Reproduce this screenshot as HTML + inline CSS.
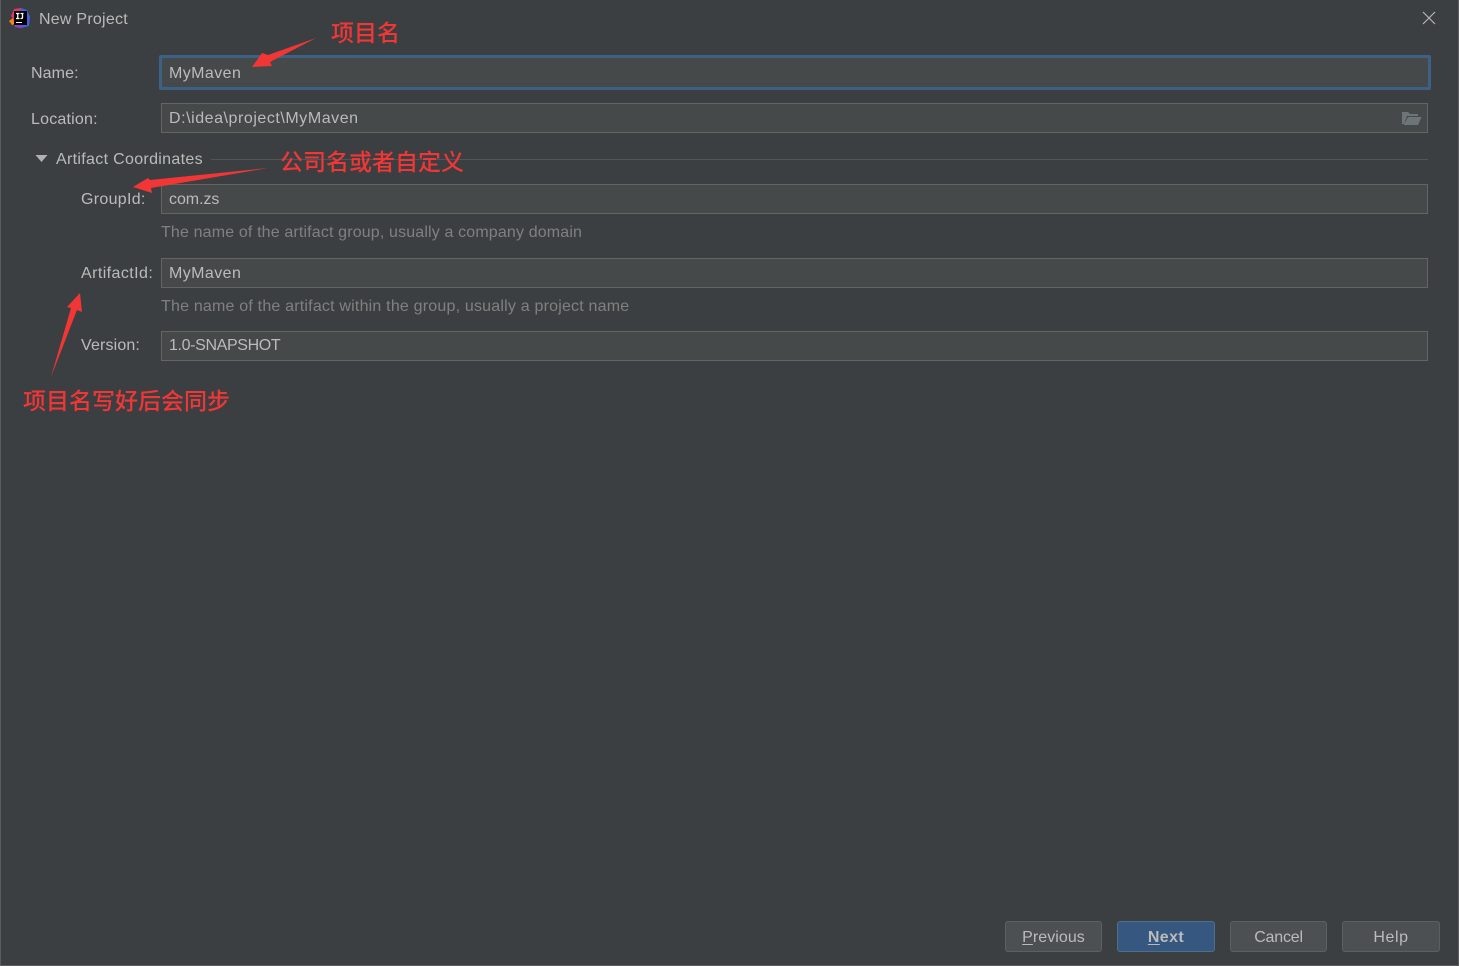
<!DOCTYPE html>
<html lang="zh">
<head>
<meta charset="utf-8">
<title>New Project</title>
<style>
html,body{margin:0;padding:0;background:#3c3f41}
#w{position:relative;width:1459px;height:966px;overflow:hidden;background:#3c3f41;font-family:"Liberation Sans","Noto Sans CJK SC",sans-serif;font-size:16px;color:#bbbbbb}
#w div{position:absolute;box-sizing:border-box;white-space:nowrap}
.t{line-height:20px;height:20px;letter-spacing:.42px}
.f{left:161px;width:1267px;height:30px;background:#45494a;border:1px solid #646464}
.h{color:#808080;letter-spacing:.17px;line-height:20px;height:20px}
.b{top:921px;width:98px;height:31px;border:1px solid #5e6060;border-radius:3px;background:#4c5052;text-align:center;line-height:31px;letter-spacing:.42px}
.r{color:#f23636;font-family:"Noto Sans CJK SC","Liberation Sans",sans-serif;font-size:23px;font-weight:500;line-height:30px;height:30px}
u{text-underline-offset:2px}
</style>
</head>
<body>
<div id="w">
<div style="left:0;top:0;width:1459px;height:966px;border:1px solid #5a5c5e;border-top:0"></div>

<svg style="position:absolute;left:9px;top:7px" width="22" height="22" viewBox="0 0 22 22">
<path d="M2 9 L5 2 L12 1 L12 8 L5 13 Z" fill="#e8306a"/>
<path d="M0 14 L4 11 L6 17 L3 18 Z" fill="#f58220"/>
<path d="M12 1 L18 3 L21 10 L20 19 L12 21 L6 20 L10 8 Z" fill="#3d63e0"/>
<path d="M5 18 L14 18 L12 21 L6 20 Z" fill="#8a3ec9"/>
<rect x="5" y="4" width="13" height="14" fill="#000"/>
<path d="M7 6.500H10.500M8.750 6.500V11.500M7 11.500H10.500M11.500 6.500H14.500M13.500 6.500V10.500Q13.500 11.500 12.300 11.500H11.500" stroke="#fff" stroke-width="1.300" fill="none"/>
<rect x="7" y="15" width="6" height="1" fill="#fff"/>
</svg>
<div class="t" style="left:39px;top:10px;letter-spacing:.24px">New Project</div>
<svg style="position:absolute;left:1422px;top:11px" width="14" height="14" viewBox="0 0 14 14"><path d="M1 1L13 13M13 1L1 13" stroke="#b4b6b8" stroke-width="1.200" fill="none"/></svg>

<div class="t" style="left:31px;top:64px;letter-spacing:.1px">Name:</div>
<div class="f" style="left:159px;top:55px;width:1272px;height:35px;border:3px solid #3d6185;border-radius:2px"></div>
<div class="t" style="left:169px;top:64px">MyMaven</div>

<div class="t" style="left:31px;top:110px;letter-spacing:.2px">Location:</div>
<div class="f" style="top:103px"></div>
<div class="t" style="left:169px;top:109px;letter-spacing:.55px">D:\idea\project\MyMaven</div>
<svg style="position:absolute;left:1401px;top:110px" width="21" height="16" viewBox="0 0 21 16"><path d="M1 14V2H7L9 4H17V6H6L3 14Z" fill="#6e7577"/><path d="M7 7H20.500L17 15H2.500Z" fill="#6e7577"/></svg>

<svg style="position:absolute;left:35px;top:154px" width="13" height="9" viewBox="0 0 13 9"><path d="M0.500 1H12.500L6.500 8Z" fill="#afb1b3"/></svg>
<div class="t" style="left:56px;top:150px;letter-spacing:.32px">Artifact Coordinates</div>
<div style="left:211px;top:159px;width:1217px;height:1px;background:#515557"></div>

<div class="t" style="left:81px;top:190px;letter-spacing:.3px">GroupId:</div>
<div class="f" style="top:184px"></div>
<div class="t" style="left:169px;top:190px;letter-spacing:-.05px">com.zs</div>
<div class="h" style="left:161px;top:223px;letter-spacing:.15px">The name of the artifact group, usually a company domain</div>

<div class="t" style="left:81px;top:264px">ArtifactId:</div>
<div class="f" style="top:258px"></div>
<div class="t" style="left:169px;top:264px">MyMaven</div>
<div class="h" style="left:161px;top:297px;letter-spacing:.2px">The name of the artifact within the group, usually a project name</div>

<div class="t" style="left:81px;top:336px;letter-spacing:.15px">Version:</div>
<div class="f" style="top:331px"></div>
<div class="t" style="left:169px;top:336px;letter-spacing:-.36px">1.0-SNAPSHOT</div>

<div class="b" style="left:1005px;width:97px;line-height:32px;letter-spacing:.05px"><u>P</u>revious</div>
<div class="b" style="left:1117px;line-height:32px;background:#365880;border-color:#4c708c;font-weight:bold"><u>N</u>ext</div>
<div class="b" style="left:1230px;width:97px;line-height:32px;letter-spacing:-.2px">Cancel</div>
<div class="b" style="left:1342px;line-height:32px;letter-spacing:.6px">Help</div>

<svg style="position:absolute;left:0;top:0" width="1459" height="966" viewBox="0 0 1459 966">
<path d="M316 38L268 55L262 53L252 67L272 66L270 62Z" fill="#f23636"/>
<path d="M268 168L150 180L148 178L133 187L152 193L151 188Z" fill="#f23636"/>
<path d="M51 377L71 308L67 307L80 293L82 312L77 310Z" fill="#f23636"/>
</svg>

<div class="r" style="left:331px;top:16px">项目名</div>
<div class="r" style="left:280px;top:145px">公司名或者自定义</div>
<div class="r" style="left:23px;top:384px">项目名写好后会同步</div>
</div>
</body>
</html>
